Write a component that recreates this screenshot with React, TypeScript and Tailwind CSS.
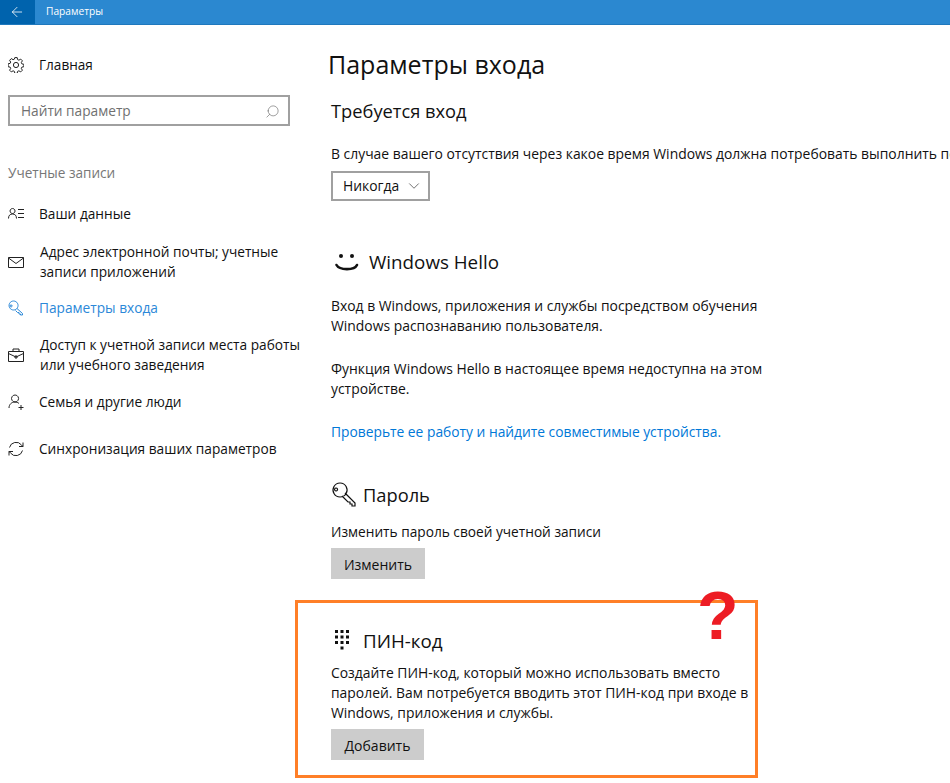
import { ArrowLeft, ChevronDown, Search } from "lucide-react";

const font = "font-['Open_Sans','Noto_Sans',sans-serif]";

function Gear() {
    return (
        <svg width="16" height="16" viewBox="0 0 16 16" fill="none" stroke="#222" strokeWidth="1">
            <circle cx="8" cy="8" r="2.6" />
            <path d="M6.8.6h2.400l.4 2 1.300.6 1.800-1.100 1.700 1.700-1.100 1.800.6 1.300 2 .4v2.400l-2 .4-.6 1.300 1.100 1.800-1.700 1.700-1.800-1.100-1.300.6-.4 2H6.800l-.4-2-1.300-.6-1.800 1.100-1.700-1.700 1.100-1.800-.6-1.300-2-.4V6.800l2-.4.6-1.300-1.100-1.800 1.700-1.700 1.800 1.100 1.300-.6z" />
        </svg>
    );
}

function NavIcon({ name, color = "#222" }: { name: string; color?: string }) {
    return (
        <svg width="16" height="16" viewBox="0 0 16 16" fill="none" stroke={color} strokeWidth="1">
            {name === "user" && <path d="M4.500 2.500a2.500 2.500 0 1 0 .1 0zM.5 12.500c0-3 1.500-4.500 4-4.500s4 1.500 4 4.500M10 3.500h6M10 7.500h6M10 11.500h6" />}
            {name === "mail" && <path d="M.5 3.500h15v10H.5zM.5 4l7.500 5.500L15.500 4" />}
            {name === "key" && <path d="M5.500 1a4.500 4.500 0 1 0 .1 0zM9 8.500l5.500 5v1.500h-2v-1h-1.500v-1.500H9.500L7.500 10.500M3 5a1 1 0 1 0 .1 0z" />}
            {name === "case" && <path d="M.5 4.500h15v10H.5zM5 4.500V2h6v2.500M.5 6.500 8 10l7.500-3.500M7 9h2v2H7z" />}
            {name === "family" && <path d="M7 1a3.500 3.500 0 1 0 .1 0zM1 14c0-3.500 2.500-6 6-6 1.500 0 3 .5 4 1.500M13 11v5M10.500 13.500h5" />}
            {name === "sync" && <path d="M1.500 6.500A6.800 6.800 0 0 1 13.500 4l1.500 1.500M15 1.500v4h-4M14.500 9.500A6.800 6.800 0 0 1 2.500 12L1 10.500M1 14.500v-4h4" />}
        </svg>
    );
}

function NavItem({ icon, lines, active, className }: { icon: string; lines: string[]; active?: boolean; className: string }) {
    return (
        <div className={`flex items-center pl-2 text-[13.7px] leading-[20px] ${active ? "text-[#2b88d8]" : "text-[#111]"} ${className}`}>
            <div className="w-[31px] shrink-0">
                <NavIcon name={icon} color={active ? "#2b88d8" : "#222"} />
            </div>
            <div className={lines.length > 1 ? "ml-[1px]" : ""}>
                {lines.map((l) => (
                    <div key={l}>{l}</div>
                ))}
            </div>
        </div>
    );
}

function Sidebar() {
    return (
        <aside className="w-[328px] shrink-0">
            <div className="flex items-center pl-2 mt-[30px] h-[20px] text-[13.600px] text-[#111]">
                <div className="w-[31px]">
                    <Gear />
                </div>
                Главная
            </div>
            <div className="ml-2 mt-[20px] w-[282px] h-[31px] border-2 border-[#a0a0a0] flex items-center justify-between pl-[11px] pr-2 pt-[1px] text-[13.700px] text-[#707070]">
                Найти параметр
                <Search size={15} strokeWidth={1} className="text-[#666] -scale-x-100" />
            </div>
            <div className="pl-2 mt-[37px] text-[13.600px] leading-[20px] text-[#777]">Учетные записи</div>
            <NavItem icon="user" lines={["Ваши данные"]} className="mt-[21px]" />
            <NavItem icon="mail" lines={["Адрес электронной почты; учетные", "записи приложений"]} className="mt-[18px]" />
            <NavItem icon="key" active lines={["Параметры входа"]} className="mt-[16px]" />
            <NavItem icon="case" lines={["Доступ к учетной записи места работы", "или учебного заведения"]} className="mt-[17px]" />
            <NavItem icon="family" lines={["Семья и другие люди"]} className="mt-[17px]" />
            <NavItem icon="sync" lines={["Синхронизация ваших параметров"]} className="mt-[27px]" />
        </aside>
    );
}

function GrayButton({ label, className }: { label: string; className: string }) {
    return (
        <div className={`h-[31px] pt-[2px] bg-[#cccccc] flex items-center justify-center text-[14px] text-[#111] ${className}`}>{label}</div>
    );
}

function Main() {
    return (
        <main className="flex-1 min-w-0 text-[#111] text-[13.900px] leading-[20px] whitespace-nowrap">
            <h1 className="mt-[19px] text-[25px] leading-[40px] font-normal">Параметры входа</h1>
            <div className="pl-[3px]">
                <h2 className="mt-[13px] text-[18.300px] leading-[28px]">Требуется вход</h2>
                <p className="mt-[19px] w-[619px] overflow-hidden">В случае вашего отсутствия через какое время Windows должна потребовать выполнить повторный вход?</p>
                <div className="mt-[7px] w-[99px] h-[30px] border-2 border-[#a0a0a0] flex items-center justify-between pl-[10px] pr-[5px]">
                    Никогда
                    <ChevronDown size={18} strokeWidth={1} className="text-[#444]" />
                </div>

                <div className="mt-[46px] flex items-center h-[30px]">
                    <svg width="38" height="30" viewBox="0 0 38 30" fill="none" className="shrink-0">
                        <circle cx="10" cy="9" r="2" fill="#111" />
                        <circle cx="21" cy="9" r="2" fill="#111" />
                        <path d="M5.500 18c3 5.500 18 5.500 20.500 0" stroke="#111" strokeWidth="2.600" strokeLinecap="round" />
                    </svg>
                    <span className="text-[18.800px]">Windows Hello</span>
                </div>

                <p className="mt-[19px]">Вход в Windows, приложения и службы посредством обучения</p>
                <p>Windows распознаванию пользователя.</p>
                <p className="mt-[23px]">Функция Windows Hello в настоящее время недоступна на этом</p>
                <p>устройстве.</p>
                <p className="mt-[23px] text-[13.800px] text-[#0078d7]">Проверьте ее работу и найдите совместимые устройства.</p>

                <div className="mt-[38px] flex items-center h-[30px]">
                    <svg width="32" height="30" viewBox="0 0 32 30" fill="none" stroke="#111" strokeWidth="1.200" className="shrink-0">
                        <path d="M9 3a7 7 0 1 0 .1 0zM14 13l10 10v3h-3v-2h-2v-2h-2l-6-6M5 8a1.500 1.500 0 1 0 .1 0z" />
                    </svg>
                    <span className="text-[18.300px]">Пароль</span>
                </div>

                <p className="mt-[12px] text-[13.700px]">Изменить пароль своей учетной записи</p>
                <GrayButton label="Изменить" className="mt-[6px] w-[94px]" />

                <div className="mt-[47px] flex items-center h-[30px]">
                    <svg width="32" height="30" viewBox="0 0 32 30" fill="#111" className="shrink-0">
                        <path d="M4 4h3v3H4zM9.500 4h3v3h-3zM15 4h3v3h-3zM4 9.500h3v3H4zM9.500 9.500h3v3h-3zM15 9.500h3v3h-3zM4 15h3v3H4zM9.500 15h3v3h-3zM15 15h3v3h-3zM9.500 20.500h3v3h-3z" />
                    </svg>
                    <span className="text-[18.800px]">ПИН-код</span>
                </div>

                <p className="mt-[7px]">Создайте ПИН-код, который можно использовать вместо</p>
                <p>паролей. Вам потребуется вводить этот ПИН-код при входе в</p>
                <p>Windows, приложения и службы.</p>
                <GrayButton label="Добавить" className="mt-[6px] w-[93px]" />
            </div>
        </main>
    );
}

export default function App() {
    return (
        <div className={`relative w-[950px] h-[783px] overflow-hidden bg-white ${font}`}>
            {/* title bar */}
            <header className="h-[25px] bg-[#2b88d0] flex items-center border-b border-[#1f78bd] text-white text-[10.200px]">
                <div className="w-[35px] h-full bg-[#0063ad] flex items-center justify-center">
                    <ArrowLeft size={16} strokeWidth={1.200} className="-translate-x-[1px]" />
                </div>
                <span className="ml-[11px]">Параметры</span>
            </header>

            <div className="flex">
                <Sidebar />
                <Main />
            </div>

            {/* annotation over the screenshot */}
            <div className="absolute left-[295px] top-[600px] w-[463px] h-[178px] border-[3px] border-[#ff7f27]" />
            <div className="absolute left-[697px] top-[575px] text-[#ed1c24] font-['Liberation_Sans',sans-serif] font-bold text-[68px] leading-[80px]">?</div>
        </div>
    );
}
